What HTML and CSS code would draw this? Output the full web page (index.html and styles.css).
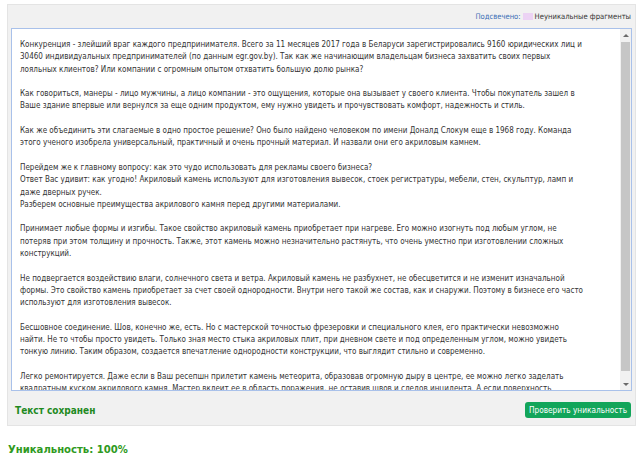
FILE: index.html
```html
<!DOCTYPE html>
<html lang="ru">
<head>
<meta charset="utf-8">
<title>Проверка уникальности</title>
<link rel="stylesheet" href="styles.css">
</head>
<body>
<div class="panel">
  <div class="legend">
    <span class="legend-label">Подсвечено:</span>
    <span class="legend-swatch"></span>
    <span class="legend-text">Неуникальные фрагменты</span>
  </div>
  <div class="editor">
    <div class="editor-text">Конкуренция - злейший враг каждого предпринимателя. Всего за 11 месяцев 2017 года в Беларуси зарегистрировались 9160 юридических лиц и
30460 индивидуальных предпринимателей (по данным egr.gov.by). Так как же начинающим владельцам бизнеса захватить своих первых
лояльных клиентов? Или компании с огромным опытом отхватить большую долю рынка?

Как говориться, манеры - лицо мужчины, а лицо компании - это ощущения, которые она вызывает у своего клиента. Чтобы покупатель зашел в
Ваше здание впервые или вернулся за еще одним продуктом, ему нужно увидеть и прочувствовать комфорт, надежность и стиль.

Как же объединить эти слагаемые в одно простое решение? Оно было найдено человеком по имени Доналд Слокум еще в 1968 году. Команда
этого ученого изобрела универсальный, практичный и очень прочный материал. И назвали они его акриловым камнем.

Перейдем же к главному вопросу: как это чудо использовать для рекламы своего бизнеса?
Ответ Вас удивит: как угодно! Акриловый камень используют для изготовления вывесок, стоек регистратуры, мебели, стен, скульптур, ламп и
даже дверных ручек.
Разберем основные преимущества акрилового камня перед другими материалами.

Принимает любые формы и изгибы. Такое свойство акриловый камень приобретает при нагреве. Его можно изогнуть под любым углом, не
потеряв при этом толщину и прочность. Также, этот камень можно незначительно растянуть, что очень уместно при изготовлении сложных
конструкций.

Не подвергается воздействию влаги, солнечного света и ветра. Акриловый камень не разбухнет, не обесцветится и не изменит изначальной
формы. Это свойство камень приобретает за счет своей однородности. Внутри него такой же состав, как и снаружи. Поэтому в бизнесе его часто
используют для изготовления вывесок.

Бесшовное соединение. Шов, конечно же, есть. Но с мастерской точностью фрезеровки и специального клея, его практически невозможно
найти. Не то чтобы просто увидеть. Только зная место стыка акриловых плит, при дневном свете и под определенным углом, можно увидеть
тонкую линию. Таким образом, создается впечатление однородности конструкции, что выглядит стильно и современно.

Легко ремонтируется. Даже если в Ваш ресепшн прилетит камень метеорита, образовав огромную дыру в центре, ее можно легко заделать
квадратным куском акрилового камня. Мастер вклеит ее в область поражения, не оставив швов и следов инцидента. А если поверхность
стола поцарапана, то ее можно отшлифовать и отполировать.</div>
    <div class="scrollbar">
      <span class="sb-arrow sb-up"></span>
      <span class="sb-thumb"></span>
      <span class="sb-arrow sb-down"></span>
    </div>
  </div>
  <div class="actions">
    <span class="saved">Текст сохранен</span>
    <button class="check-btn" type="button">Проверить уникальность</button>
  </div>
</div>
<div class="result">Уникальность: 100%</div>
</body>
</html>
```
FILE: styles.css
```css
html, body {
  margin: 0;
  padding: 0;
  background: #ffffff;
}
body {
  font-family: "DejaVu Sans Condensed", "DejaVu Sans", sans-serif;
  font-stretch: condensed;
  color: #333333;
}
.panel {
  margin: 4px 4px 0 7px;
  background: #f1f1f1;
  border: 1px solid #e4e4e4;
  padding: 0 3px 0 3px;
  height: 422px;
  box-sizing: border-box;
  display: flex;
  flex-direction: column;
}
.legend {
  display: flex;
  justify-content: flex-end;
  align-items: center;
  gap: 2px;
  height: 23px;
  font-size: 7.6px;
  padding-right: 1px;
}
.legend-label {
  color: #3b6eb5;
}
.legend-swatch {
  width: 10px;
  height: 7px;
  background: #ecd3f4;
}
.legend-text {
  color: #333;
}
.editor {
  display: flex;
  height: 363px;
  box-sizing: border-box;
  border: 1px solid #a9c1ea;
  background: #ffffff;
  overflow: hidden;
}
.editor-text {
  flex: 1;
  min-width: 0;
  overflow: hidden;
  white-space: pre;
  font-size: 8px;
  line-height: 12.3px;
  padding: 10px 0 0 8px;
  color: #333333;
}
.scrollbar {
  width: 11px;
  background: #f1f1f1;
  display: flex;
  flex-direction: column;
  align-items: center;
}
.sb-arrow {
  height: 12px;
  width: 100%;
  display: flex;
  align-items: center;
  justify-content: center;
}
.sb-arrow::before {
  content: "";
  border-left: 3px solid transparent;
  border-right: 3px solid transparent;
}
.sb-up::before {
  border-bottom: 3px solid #6a6a6a;
}
.sb-down::before {
  border-top: 3px solid #6a6a6a;
}
.sb-thumb {
  flex: 1;
  width: 9px;
  background: #c6c6c6;
  margin: 1px 0 7px;
}
.actions {
  display: flex;
  justify-content: space-between;
  align-items: center;
  padding: 11px 0 0 4px;
}
.saved {
  color: #1f8a1f;
  font-weight: bold;
  font-size: 10px;
}
.check-btn {
  font-family: inherit;
  font-stretch: condensed;
  font-size: 8.2px;
  color: #ffffff;
  background: #12a55a;
  border: none;
  border-radius: 3px;
  height: 16px;
  padding: 0 4px;
  margin-right: 1px;
}
.result {
  margin: 17px 0 0 8px;
  color: #2f9a22;
  font-weight: bold;
  font-size: 11.2px;
}
```
